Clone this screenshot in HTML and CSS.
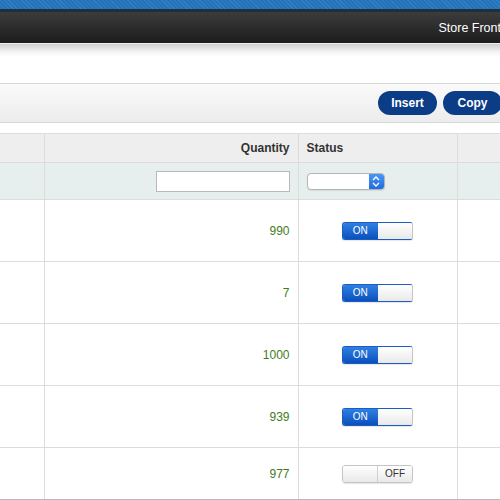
FILE: index.html
```html
<!DOCTYPE html>
<html>
<head>
<meta charset="utf-8">
<link rel="stylesheet" href="styles.css">
</head>
<body>
<div class="page">
  <header class="topbar">
    <div class="stripe"></div>
    <nav class="nav"><span class="nav-link">Store Front</span></nav>
  </header>
  <div class="under-nav"></div>
  <div class="toolbar">
    <button class="btn">Insert</button>
    <button class="btn">Copy</button>
  </div>
  <div class="gap"></div>
  <table class="grid">
    <colgroup><col class="c1"><col class="c2"><col class="c3"><col class="c4"></colgroup>
    <tr class="head">
      <th></th><th class="num">Quantity</th><th>Status</th><th></th>
    </tr>
    <tr class="filter">
      <td></td>
      <td class="num"><input class="filter-input" type="text"></td>
      <td><span class="select"><span class="select-arrow"><svg width="10" height="13" viewBox="0 0 10 13"><path d="M2 5 L5 2 L8 5 M2 8 L5 11 L8 8" fill="none" stroke="#fff" stroke-width="1.4"/></svg></span></span></td>
      <td></td>
    </tr>
    <tr class="row">
      <td></td><td class="num qty">990</td>
      <td class="center"><span class="toggle on"><span class="t-left">ON</span><span class="t-right"></span></span></td><td></td>
    </tr>
    <tr class="row">
      <td></td><td class="num qty">7</td>
      <td class="center"><span class="toggle on"><span class="t-left">ON</span><span class="t-right"></span></span></td><td></td>
    </tr>
    <tr class="row">
      <td></td><td class="num qty">1000</td>
      <td class="center"><span class="toggle on"><span class="t-left">ON</span><span class="t-right"></span></span></td><td></td>
    </tr>
    <tr class="row">
      <td></td><td class="num qty">939</td>
      <td class="center"><span class="toggle on"><span class="t-left">ON</span><span class="t-right"></span></span></td><td></td>
    </tr>
    <tr class="row last">
      <td></td><td class="num qty">977</td>
      <td class="center"><span class="toggle off"><span class="t-left"></span><span class="t-right">OFF</span></span></td><td></td>
    </tr>
  </table>
</div>
</body>
</html>
```

FILE: styles.css
```css
html, body {
  margin: 0;
  padding: 0;
  background: #fff;
  overflow: hidden;
  font-family: "Liberation Sans", Arial, sans-serif;
}
.page {
  width: 520px;
}
.topbar {
  display: flex;
  flex-direction: column;
}
.stripe {
  height: 9px;
  background: repeating-linear-gradient(45deg, #2f7fc6 0, #2f7fc6 1px, #2672b8 1px, #2672b8 3px);
}
.nav {
  height: 31px;
  border-top: 3px solid #1f2f3d;
  border-bottom: 1px solid #efefef;
  background: linear-gradient(#3c3c3c, #1c1c1c);
  display: flex;
  align-items: center;
  justify-content: flex-end;
  padding-right: 19px;
}
.nav-link {
  color: #fff;
  font-size: 12.5px;
  white-space: nowrap;
}
.under-nav {
  height: 39px;
  background: linear-gradient(#cfcfcf 0, #f4f4f4 8px, #fff 13px);
}
.toolbar {
  height: 38px;
  border-top: 1px solid #d8d8d8;
  border-bottom: 1px solid #d8d8d8;
  background: linear-gradient(#fafafa, #ececec);
  display: flex;
  align-items: center;
  justify-content: flex-end;
  gap: 6px;
  padding-right: 18px;
}
.btn {
  height: 24px;
  padding: 0;
  width: 59px;
  border: none;
  border-radius: 12px;
  background: #0b3c86;
  color: #fff;
  font-family: "Liberation Sans", Arial, sans-serif;
  font-weight: bold;
  font-size: 12px;
}
.gap {
  height: 10px;
}
.grid {
  table-layout: fixed;
  width: 520px;
  border-collapse: collapse;
  font-size: 12px;
  color: #333;
}
.c1 { width: 44px; }
.c2 { width: 254px; }
.c3 { width: 159px; }
.c4 { width: 63px; }
.grid th, .grid td {
  border: 1px solid #dcdcdc;
  padding: 0 8px;
}
.grid tr > :first-child { border-left: none; }
.head th {
  height: 28px;
  background: #eeeeee;
  font-weight: bold;
  text-align: left;
  color: #333;
}
.grid .num { text-align: right; }
.filter td {
  height: 36px;
  background: #e6eeee;
}
.filter-input {
  box-sizing: border-box;
  width: 134px;
  height: 21px;
  border: 1px solid #b9b9b9;
  background: #fff;
  margin: 0;
  vertical-align: middle;
}
.select {
  display: inline-flex;
  justify-content: flex-end;
  width: 78px;
  height: 17px;
  box-sizing: border-box;
  border: 1px solid #b5b5b5;
  border-radius: 4px;
  background: #fff;
  overflow: hidden;
  vertical-align: middle;
  box-shadow: 0 1px 1px rgba(0,0,0,0.08);
}
.select-arrow {
  width: 15px;
  height: 100%;
  background: linear-gradient(#4b95f2, #1e6de0);
  display: flex;
  align-items: center;
  justify-content: center;
}
.row td {
  height: 61px;
  background: #fff;
}
.row.last td {
  height: 51px;
  padding-top: 0;
  border-bottom: 1px solid #b8b8b8;
}
.qty { color: #3f7d1c; }
.center { text-align: center; }
.toggle {
  display: inline-flex;
  width: 71px;
  height: 18px;
  box-sizing: border-box;
  border: 1px solid #c4c4c4;
  border-radius: 3px;
  overflow: hidden;
  vertical-align: middle;
  font-size: 10px;
  box-shadow: 0 1px 1px rgba(0,0,0,0.1);
}
.t-left, .t-right {
  flex: 1;
  display: flex;
  align-items: center;
  justify-content: center;
  background: linear-gradient(#ffffff, #e9e9e9);
  color: #333;
}
.toggle.on { border-color: #1a5cc2; border-right-color: #c4c4c4; }
.toggle.on .t-left {
  background: linear-gradient(#2f80e2, #0b50bd);
  color: #fff;
}
.toggle.off .t-right {
  border-left: 1px solid #d0d0d0;
}
```
